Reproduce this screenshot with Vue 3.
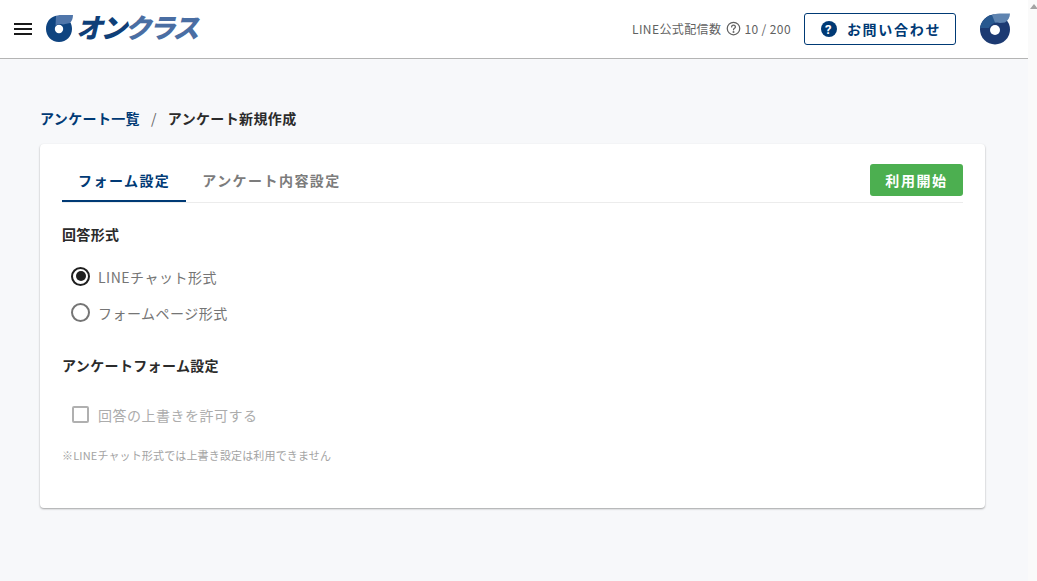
<script setup>
const radios = [
  { label: 'LINEチャット形式', checked: true },
  { label: 'フォームページ形式', checked: false },
]
</script>

<template>
  <div class="page">
    <header class="topbar">
      <div class="brand">
        <svg class="menu" width="18" height="12" viewBox="0 0 18 12"><path d="M0 0h18v2H0zM0 5h18v2H0zM0 10h18v2H0z" fill="#1a1a1a"/></svg>
        <svg class="mark" width="27" height="27" viewBox="0 0 27 27">
          <path d="M10 .8C4 2 0 7.500 0 14c0 7 5.500 13 13 13s13-6 13-13c0-2.500-.6-4.500-1.500-6.500L15 8z" fill="#0f4480"/>
          <path d="M10 .8C12 .2 13 0 15 0h12c0 3-1 6-3 8l-7 1.500C14 8.500 11.500 9 9.500 11z" fill="#5076aa"/>
          <circle cx="13" cy="14" r="4.200" fill="#fff"/>
        </svg>
        <span class="logotext"><span class="dark">オン</span>クラス</span>
      </div>
      <div class="right">
        <span class="quota">LINE公式配信数
          <svg class="help" width="15" height="15" viewBox="0 0 24 24" fill="none" stroke="#616161" stroke-width="2"><circle cx="12" cy="12" r="10"/><path d="M9 9.500a3 3 0 0 1 6 0c0 2-3 2.500-3 4.500" stroke-linecap="round"/><circle cx="12" cy="17.500" r=".6" fill="#616161"/></svg>
          10 / 200</span>
        <button class="contact">
          <svg width="16" height="16" viewBox="0 0 16 16"><circle cx="8" cy="8" r="8" fill="#003a75"/><text x="8" y="12.500" text-anchor="middle" font-size="13" font-weight="700" fill="#fff" font-family="Roboto, sans-serif">?</text></svg>
          お問い合わせ
        </button>
        <svg class="avatar" width="31" height="32" viewBox="1 0 31 32">
          <circle cx="16" cy="16.500" r="15" fill="#1c3a72"/>
          <path d="M1 15C2 8 8 2 15 1.500l6 7.500c-5 0-9 2-11 6z" fill="#28588f"/>
          <path d="M13 2c3-1.500 7-1.500 10-1.500h8c0 4-2 7-5 9l-5 .5c-2-.5-3-.5-5-.5z" fill="#5f84b0"/>
          <circle cx="16" cy="17" r="5" fill="#fff"/>
        </svg>
      </div>
    </header>

    <main class="content">
      <nav class="crumbs">
        <a>アンケート一覧</a><span class="sep">/</span><span>アンケート新規作成</span>
      </nav>
      <section class="card">
        <div class="tabs">
          <div class="tab active">フォーム設定</div>
          <div class="tab">アンケート内容設定</div>
          <button class="start">利用開始</button>
        </div>
        <h2 class="h first">回答形式</h2>
        <div class="radios">
          <label v-for="r in radios" :key="r.label" class="radio">
            <span class="dot" :class="{ on: r.checked }"></span>{{ r.label }}
          </label>
        </div>
        <h2 class="h second">アンケートフォーム設定</h2>
        <label class="check"><span class="box"></span>回答の上書きを許可する</label>
        <p class="note">※LINEチャット形式では上書き設定は利用できません</p>
      </section>
    </main>
    <aside class="scroll"><i></i></aside>
  </div>
</template>

<style>
html, body { margin: 0; overflow: hidden; }
</style>

<style scoped>
* { box-sizing: border-box; }
.page {
  position: relative;
  width: 1037px;
  height: 581px;
  padding-right: 9px;
  background: #f7f8fa;
  font-family: "Noto Sans CJK JP", "Noto Sans", sans-serif;
  color: #2b2b2b;
  overflow: hidden;
}
.topbar {
  height: 59px;
  background: #fff;
  border-bottom: 1px solid #b4b4b4;
  display: flex;
  justify-content: space-between;
  align-items: center;
  padding: 0 17px 0 14px;
}
.brand { display: flex; align-items: center; }
.menu { margin-right: 14px; }
.mark { margin-right: 3px; margin-top: -1px; }
.logotext {
  font-size: 27px;
  font-weight: 900;
  font-style: italic;
  color: #4a6ea3;
  letter-spacing: -2.800px;
  line-height: 1;
  margin-top: -5px;
}
.dark { color: #0f3f78; }
.right { display: flex; align-items: center; }
.quota {
  display: flex;
  align-items: center;
  gap: 4px;
  font-size: 12px;
  letter-spacing: .4px;
  color: #616161;
  margin-right: 13px;
  margin-top: -2px;
}
.help { margin: 0 -1px 0 1px; }
.contact {
  width: 152px;
  height: 32px;
  display: flex;
  align-items: center;
  justify-content: center;
  gap: 10px;
  background: #fff;
  border: 1px solid #003a75;
  border-radius: 3px;
  color: #003a75;
  font: 700 14px "Noto Sans CJK JP", sans-serif;
  letter-spacing: 1.700px;
  margin-right: 24px;
  padding: 0 0 0 2px;
}
.content { padding: 49px 43px 0 40px; }
.crumbs {
  display: flex;
  align-items: center;
  font-size: 14px;
  font-weight: 700;
  line-height: 20px;
  letter-spacing: .36px;
  margin-bottom: 16px;
  height: 20px;
}
.crumbs a { color: #003a75; }
.sep { color: #666; font-weight: 400; margin: 0 11px; }
.card {
  height: 364px;
  background: #fff;
  border-radius: 4px;
  box-shadow: 0 1px 2px rgba(0, 0, 0, .35);
  padding: 20px 22px;
}
.tabs {
  display: flex;
  align-items: stretch;
  height: 39px;
  border-bottom: 1px solid #ececec;
}
.tab {
  font-size: 14px;
  font-weight: 700;
  letter-spacing: 1.450px;
  color: #7c7c7c;
  padding: 6px 16px 0;
  height: 38px;
}
.tab.active {
  color: #003a75;
  border-bottom: 2px solid #003a75;
  height: 38px;
}
.start {
  margin-left: auto;
  width: 93px;
  height: 32px;
  background: #4caf50;
  border: 0;
  border-radius: 3px;
  color: #fff;
  font: 700 14px "Noto Sans CJK JP", sans-serif;
  letter-spacing: 1.600px;
  padding: 0;
}
.h { margin: 0; font-size: 14px; font-weight: 700; line-height: 20px; letter-spacing: .36px; color: #2b2b2b; }
.first { margin-top: 21px; }
.second { margin-top: 30px; }
.radios { display: flex; flex-direction: column; gap: 12px; margin-top: 21px; padding-left: 9px; }
.radio, .check {
  display: flex;
  align-items: center;
  height: 24px;
  font-size: 14px;
  letter-spacing: .5px;
  color: #757575;
}
.dot {
  width: 19px;
  height: 19px;
  border: 2px solid #757575;
  border-radius: 50%;
  margin-right: 8px;
  margin-top: -2px;
  position: relative;
}
.dot.on { border-color: #1f1f1f; }
.dot.on::after {
  content: "";
  position: absolute;
  inset: 2.500px;
  border-radius: 50%;
  background: #1f1f1f;
}
.check { margin-top: 28px; padding-left: 10px; color: #acacac; }
.box { width: 17px; height: 17px; border: 2px solid #b0b0b0; border-radius: 2px; margin-right: 9px; margin-top: -2px; }
.note { margin: 20px 0 0; font-size: 11px; line-height: 16px; color: #a3a3a3; letter-spacing: .15px; }
.scroll { position: absolute; top: 0; right: 0; bottom: 0; width: 9px; background: #fafafa; }
.scroll i {
  position: absolute;
  top: 4px;
  left: 2px;
  border-left: 4px solid transparent;
  border-right: 4px solid transparent;
  border-bottom: 5px solid #a3a3a3;
}
</style>
